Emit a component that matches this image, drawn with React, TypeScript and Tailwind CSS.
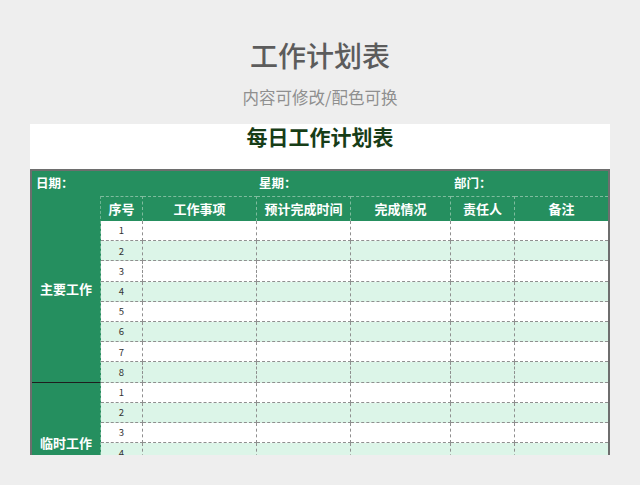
import React from "react";

const cols = ["序号", "工作事项", "预计完成时间", "完成情况", "责任人", "备注"];

function DataRows({ count, startRow }: { count: number; startRow: number }) {
  const cells: React.ReactNode[] = [];
  for (let i = 0; i < count; i++) {
    const even = i % 2 === 1;
    const bg = even ? "bg-[#dcf5e8]" : "bg-white";
    for (let c = 0; c < 6; c++) {
      cells.push(
        <div
          key={`${startRow}-${i}-${c}`}
          style={{ gridRow: startRow + i, gridColumn: c + 2 }}
          className={`${bg} border-b border-dashed border-b-[#8f8f8f] ${
            c < 5 ? "border-r border-r-[#8f8f8f]" : ""
          } flex items-center justify-center text-[9.5px] font-normal text-[#333]`}
        >
          {c === 0 ? i + 1 : ""}
        </div>
      );
    }
  }
  return <>{cells}</>;
}

export default function App() {
  return (
    <div
      className="w-[640px] h-[485px] bg-[#eeeeee] overflow-hidden flex flex-col items-center"
      style={{ fontFamily: '"Noto Sans CJK SC", "Noto Sans", sans-serif' }}
    >
      <div className="pt-[37px] text-[28px] leading-[36px] font-medium text-[#5c5c5c]">工作计划表</div>
      <div className="mt-[12px] text-[16.5px] leading-[24px] text-[#8f8f8f]">内容可修改/配色可换</div>
      <div className="mt-[15px] w-[580px] h-[331px] bg-white overflow-hidden">
        <div className="h-[45px] text-center text-[21px] leading-[24px] font-bold text-[#173d17]">每日工作计划表</div>
        <div className="border-2 border-[#6e6e6e] bg-[#258f5f]">
          <div
            className="grid text-white font-bold"
            style={{
              gridTemplateColumns: "69px 42px 114px 94px 100px 64px 93px",
              gridTemplateRows: "25px 25px repeat(14, 20.2px)",
            }}
          >
            <div className="col-span-3 flex items-center pl-[4px] text-[12.5px]">日期：</div>
            <div className="col-span-2 flex items-center pl-[2px] text-[12.5px]">星期：</div>
            <div className="col-span-2 flex items-center pl-[3px] text-[12.5px]">部门：</div>

            <div
              style={{ gridRow: "2 / span 9", gridColumn: 1 }}
              className="flex items-center justify-center text-[13px] border-b border-solid border-b-[#1e1e1e] border-r border-r-[#6fb493] [border-right-style:dashed]"
            >
              主要工作
            </div>
            {cols.map((c, i) => (
              <div
                key={c}
                style={{ gridRow: 2, gridColumn: i + 2 }}
                className={`flex items-center justify-center text-[13px] border-t border-dashed border-t-[#7fbc9e] ${
                  i < 5 ? "border-r border-r-[#7fbc9e]" : ""
                }`}
              >
                {c}
              </div>
            ))}
            <DataRows count={8} startRow={3} />
            <div
              style={{ gridRow: "11 / span 6", gridColumn: 1 }}
              className="flex items-center justify-center text-[13px] border-r border-dashed border-r-[#6fb493]"
            >
              临时工作
            </div>
            <DataRows count={6} startRow={11} />
          </div>
        </div>
      </div>
    </div>
  );
}
